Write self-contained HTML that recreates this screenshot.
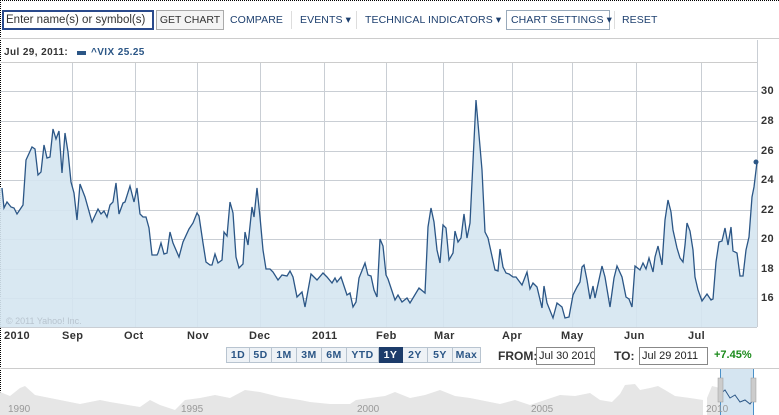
<!DOCTYPE html>
<html><head><meta charset="utf-8"><style>
body{margin:0;width:779px;height:415px;overflow:hidden;background:#fff;font-family:"Liberation Sans",sans-serif;position:relative}
div,span{white-space:nowrap}
.t{position:absolute;font-size:10.5px;color:#1d3f6e;letter-spacing:.1px;top:14px}
.b{position:absolute;font-weight:bold;font-size:11px;color:#333;letter-spacing:.4px}
</style></head><body>
<div style="position:absolute;left:0;top:0;width:779px;height:415px;border-left:1px dotted #000;border-top:1px dotted #000;box-sizing:border-box"></div>
<div style="position:absolute;left:2px;top:10px;width:146px;height:16px;border:2px solid #2a4a8c;font-size:11.5px;color:#333;line-height:16px;padding-left:2px;overflow:hidden">Enter name(s) or symbol(s)</div>
<div style="position:absolute;left:156px;top:10px;width:66px;height:18px;border:1px solid #aaa;background:#f4f4f4;font-size:10.5px;color:#333;line-height:18px;text-align:center">GET CHART</div>
<div class="t" style="left:230px">COMPARE</div>
<div style="position:absolute;left:291px;top:11px;width:1px;height:18px;background:#ddd"></div>
<div class="t" style="left:300px">EVENTS ▾</div>
<div style="position:absolute;left:356px;top:11px;width:1px;height:18px;background:#ddd"></div>
<div class="t" style="left:365px">TECHNICAL INDICATORS ▾</div>
<div style="position:absolute;left:506px;top:10px;width:102px;height:18px;border:1px solid #9ab"></div>
<div class="t" style="left:511px">CHART SETTINGS ▾</div>
<div style="position:absolute;left:614px;top:11px;width:1px;height:18px;background:#ddd"></div>
<div class="t" style="left:622px">RESET</div>
<svg width="779" height="415" style="position:absolute;left:0;top:0">
<line x1="0" y1="38.5" x2="779" y2="38.5" stroke="#ccc"/>
<line x1="0" y1="62.5" x2="757" y2="62.5" stroke="#ccc"/>
<g stroke="#c9ced4" stroke-width="1">
<line x1="0" y1="91.5" x2="757" y2="91.5"/><line x1="0" y1="121.5" x2="757" y2="121.5"/><line x1="0" y1="151.5" x2="757" y2="151.5"/><line x1="0" y1="180.5" x2="757" y2="180.5"/><line x1="0" y1="210.5" x2="757" y2="210.5"/><line x1="0" y1="239.5" x2="757" y2="239.5"/><line x1="0" y1="269.5" x2="757" y2="269.5"/><line x1="0" y1="298.5" x2="757" y2="298.5"/>
<line x1="72.5" y1="63" x2="72.5" y2="327"/><line x1="135.5" y1="63" x2="135.5" y2="327"/><line x1="197.5" y1="63" x2="197.5" y2="327"/><line x1="260.5" y1="63" x2="260.5" y2="327"/><line x1="324.5" y1="63" x2="324.5" y2="327"/><line x1="386.5" y1="63" x2="386.5" y2="327"/><line x1="443.5" y1="63" x2="443.5" y2="327"/><line x1="512.5" y1="63" x2="512.5" y2="327"/><line x1="572.5" y1="63" x2="572.5" y2="327"/><line x1="636.5" y1="63" x2="636.5" y2="327"/><line x1="701.5" y1="63" x2="701.5" y2="327"/>
<line x1="757.5" y1="40" x2="757.5" y2="327"/>
</g>
<polygon fill="#d5e5f1" fill-opacity=".9" stroke="none" points="0,327 0,188 2,188 4,208 7,202 11,207 14,208 17,214 23,205 26,160 32,147 35,149 38,175 41,172 44,145 47,158 50,157 53,129 56,139 59,131 62,173 65,133 68,152 71,182 74,193 77,220 80,184 85,197 92,222 98,209 101,214 104,211 107,217 110,205 113,202 116,183 119,214 123,203 125,202 130,186 134,202 137,188 140,214 143,217 146,217 149,228 152,255 157,255 158,253 161,243 164,254 167,253 170,232 173,243 179,257 183,242 189,229 193,223 197,213 199,216 203,243 206,262 210,265 212,265 215,254 218,263 222,260 224,232 227,236 230,202 233,213 236,257 239,268 243,264 245,232 248,245 252,207 254,217 257,188 260,217 263,250 266,269 270,269 273,272 278,280 282,275 287,276 290,271 293,277 297,297 302,292 305,307 311,274 317,280 323,273 327,277 332,283 335,278 337,282 341,277 347,295 350,293 353,307 356,302 359,278 365,263 368,275 371,276 374,290 377,297 380,239 383,246 386,275 388,279 395,300 398,295 402,302 407,298 410,303 419,288 425,293 428,227 431,208 434,222 437,250 440,263 443,225 446,228 449,260 453,253 455,231 458,242 461,238 464,214 467,238 470,223 476,100 482,170 485,232 488,238 495,270 498,271 500,249 503,267 506,273 509,274 513,277 516,277 522,285 527,272 530,289 533,283 537,287 542,308 544,286 547,303 553,318 557,303 562,307 565,318 569,317 573,295 577,287 580,282 582,267 584,265 587,280 590,299 593,286 595,298 602,266 605,277 610,307 614,278 617,266 622,277 626,297 629,299 632,307 635,266 640,270 643,263 646,269 649,258 653,272 655,257 658,246 662,265 665,220 668,200 671,212 673,230 677,248 680,258 683,262 685,245 687,223 690,231 693,250 695,277 698,290 702,301 707,294 711,300 713,299 716,262 719,242 722,241 725,228 728,245 731,227 733,251 737,253 740,276 743,276 746,250 749,237 752,197 754,187 757,162 757,327"/>
<polyline fill="none" stroke="#2b5686" stroke-width="1.3" points="2,188 4,208 7,202 11,207 14,208 17,214 23,205 26,160 32,147 35,149 38,175 41,172 44,145 47,158 50,157 53,129 56,139 59,131 62,173 65,133 68,152 71,182 74,193 77,220 80,184 85,197 92,222 98,209 101,214 104,211 107,217 110,205 113,202 116,183 119,214 123,203 125,202 130,186 134,202 137,188 140,214 143,217 146,217 149,228 152,255 157,255 158,253 161,243 164,254 167,253 170,232 173,243 179,257 183,242 189,229 193,223 197,213 199,216 203,243 206,262 210,265 212,265 215,254 218,263 222,260 224,232 227,236 230,202 233,213 236,257 239,268 243,264 245,232 248,245 252,207 254,217 257,188 260,217 263,250 266,269 270,269 273,272 278,280 282,275 287,276 290,271 293,277 297,297 302,292 305,307 311,274 317,280 323,273 327,277 332,283 335,278 337,282 341,277 347,295 350,293 353,307 356,302 359,278 365,263 368,275 371,276 374,290 377,297 380,239 383,246 386,275 388,279 395,300 398,295 402,302 407,298 410,303 419,288 425,293 428,227 431,208 434,222 437,250 440,263 443,225 446,228 449,260 453,253 455,231 458,242 461,238 464,214 467,238 470,223 476,100 482,170 485,232 488,238 495,270 498,271 500,249 503,267 506,273 509,274 513,277 516,277 522,285 527,272 530,289 533,283 537,287 542,308 544,286 547,303 553,318 557,303 562,307 565,318 569,317 573,295 577,287 580,282 582,267 584,265 587,280 590,299 593,286 595,298 602,266 605,277 610,307 614,278 617,266 622,277 626,297 629,299 632,307 635,266 640,270 643,263 646,269 649,258 653,272 655,257 658,246 662,265 665,220 668,200 671,212 673,230 677,248 680,258 683,262 685,245 687,223 690,231 693,250 695,277 698,290 702,301 707,294 711,300 713,299 716,262 719,242 722,241 725,228 728,245 731,227 733,251 737,253 740,276 743,276 746,250 749,237 752,197 754,187 757,162"/>
<circle cx="756" cy="162" r="2.5" fill="#2b5686"/>
<line x1="0" y1="327.5" x2="757" y2="327.5" stroke="#c9ced4"/>
<line x1="0" y1="368.5" x2="779" y2="368.5" stroke="#ccc"/>
<polygon fill="#e6e6e6" points="0,415 0,392 10,396 20,388 25,386 35,395 50,398 60,400 80,404 100,400 110,402 140,407 150,400 160,405 175,410 185,400 200,398 215,395 230,398 245,390 260,392 280,397 300,400 310,402 330,404 350,404 356,400 370,398 385,396 395,392 410,398 425,395 440,390 455,396 470,398 480,400 500,404 515,400 530,405 545,400 560,395 575,396 590,393 600,400 612,402 620,394 625,385 635,384 640,390 650,388 658,386 665,390 675,396 690,398 703,400 703,415"/>
<polygon fill="#e6e6e6" points="707,415 707,398 712,386 720,388 720,415"/>
<rect x="720" y="369" width="33" height="46" fill="#d5e5f1"/>
<polyline fill="none" stroke="#2b5686" stroke-width="1" points="720,394 725,390 730,398 735,395 740,402 745,400 750,404 753,400"/>
<line x1="720.5" y1="369" x2="720.5" y2="415" stroke="#4a90c8"/>
<line x1="753.5" y1="369" x2="753.5" y2="415" stroke="#4a90c8"/>
<rect x="718" y="378" width="5" height="24" fill="#ccc" stroke="#999" stroke-width=".5"/>
<rect x="751" y="378" width="5" height="24" fill="#ccc" stroke="#999" stroke-width=".5"/>
<g fill="#999" font-family="Liberation Sans" font-size="10"><text x="8" y="412">1990</text><text x="181" y="412">1995</text><text x="357" y="412">2000</text><text x="531" y="412">2005</text><text x="706" y="412">2010</text></g>
<text x="6" y="324" fill="#b8c4cf" font-family="Liberation Sans" font-size="9">© 2011  Yahoo! Inc.</text>
</svg>
<div class="b" style="left:4px;top:47px;font-size:10px">Jul 29, 2011:</div>
<div style="position:absolute;left:77px;top:51px;width:9px;height:4px;background:#2b5686"></div>
<div class="b" style="left:91px;top:47px;font-size:10px;color:#2b5686">^VIX 25.25</div>
<div class="b" style="left:761px;top:85px">30</div><div class="b" style="left:761px;top:115px">28</div><div class="b" style="left:761px;top:145px">26</div><div class="b" style="left:761px;top:174px">24</div><div class="b" style="left:761px;top:204px">22</div><div class="b" style="left:761px;top:233px">20</div><div class="b" style="left:761px;top:263px">18</div><div class="b" style="left:761px;top:292px">16</div>
<div class="b" style="left:4px;top:330px">2010</div><div class="b" style="left:62px;top:330px">Sep</div><div class="b" style="left:124px;top:330px">Oct</div><div class="b" style="left:187px;top:330px">Nov</div><div class="b" style="left:249px;top:330px">Dec</div><div class="b" style="left:312px;top:330px">2011</div><div class="b" style="left:376px;top:330px">Feb</div><div class="b" style="left:434px;top:330px">Mar</div><div class="b" style="left:502px;top:330px">Apr</div><div class="b" style="left:561px;top:330px">May</div><div class="b" style="left:624px;top:330px">Jun</div><div class="b" style="left:688px;top:330px">Jul</div>
<div style="position:absolute;left:226px;top:347px;height:16px;display:flex;font:bold 10.5px 'Liberation Sans',sans-serif;letter-spacing:.4px;color:#2b5686">
<span style="width:22px;border:1px solid #b8c4d0;background:#eef2f6;text-align:center;line-height:14px">1D</span><span style="width:21px;border:1px solid #b8c4d0;border-left:0;background:#eef2f6;text-align:center;line-height:14px">5D</span><span style="width:24px;border:1px solid #b8c4d0;border-left:0;background:#eef2f6;text-align:center;line-height:14px">1M</span><span style="width:24px;border:1px solid #b8c4d0;border-left:0;background:#eef2f6;text-align:center;line-height:14px">3M</span><span style="width:24px;border:1px solid #b8c4d0;border-left:0;background:#eef2f6;text-align:center;line-height:14px">6M</span><span style="width:31px;border:1px solid #b8c4d0;border-left:0;background:#eef2f6;text-align:center;line-height:14px">YTD</span><span style="width:23px;border:1px solid #1d3c6a;border-left:0;background:#1d3c6a;color:#fff;text-align:center;line-height:14px">1Y</span><span style="width:24px;border:1px solid #b8c4d0;border-left:0;background:#eef2f6;text-align:center;line-height:14px">2Y</span><span style="width:24px;border:1px solid #b8c4d0;border-left:0;background:#eef2f6;text-align:center;line-height:14px">5Y</span><span style="width:27px;border:1px solid #b8c4d0;border-left:0;background:#eef2f6;text-align:center;line-height:14px">Max</span></div>
<div class="b" style="left:498px;top:349px;font-size:12px;letter-spacing:0">FROM:</div>
<div style="position:absolute;left:536px;top:347px;width:55px;height:16px;border:1px solid #888;font-size:11px;line-height:16px;padding-left:2px;color:#222;overflow:hidden">Jul 30 2010</div>
<div class="b" style="left:614px;top:349px;font-size:12px;letter-spacing:0">TO:</div>
<div style="position:absolute;left:639px;top:347px;width:65px;height:16px;border:1px solid #888;font-size:11px;line-height:16px;padding-left:2px;color:#222;overflow:hidden">Jul 29 2011</div>
<div style="position:absolute;left:714px;top:349px;font-size:11px;font-weight:bold;color:#1a8a1a">+7.45%</div>
</body></html>
